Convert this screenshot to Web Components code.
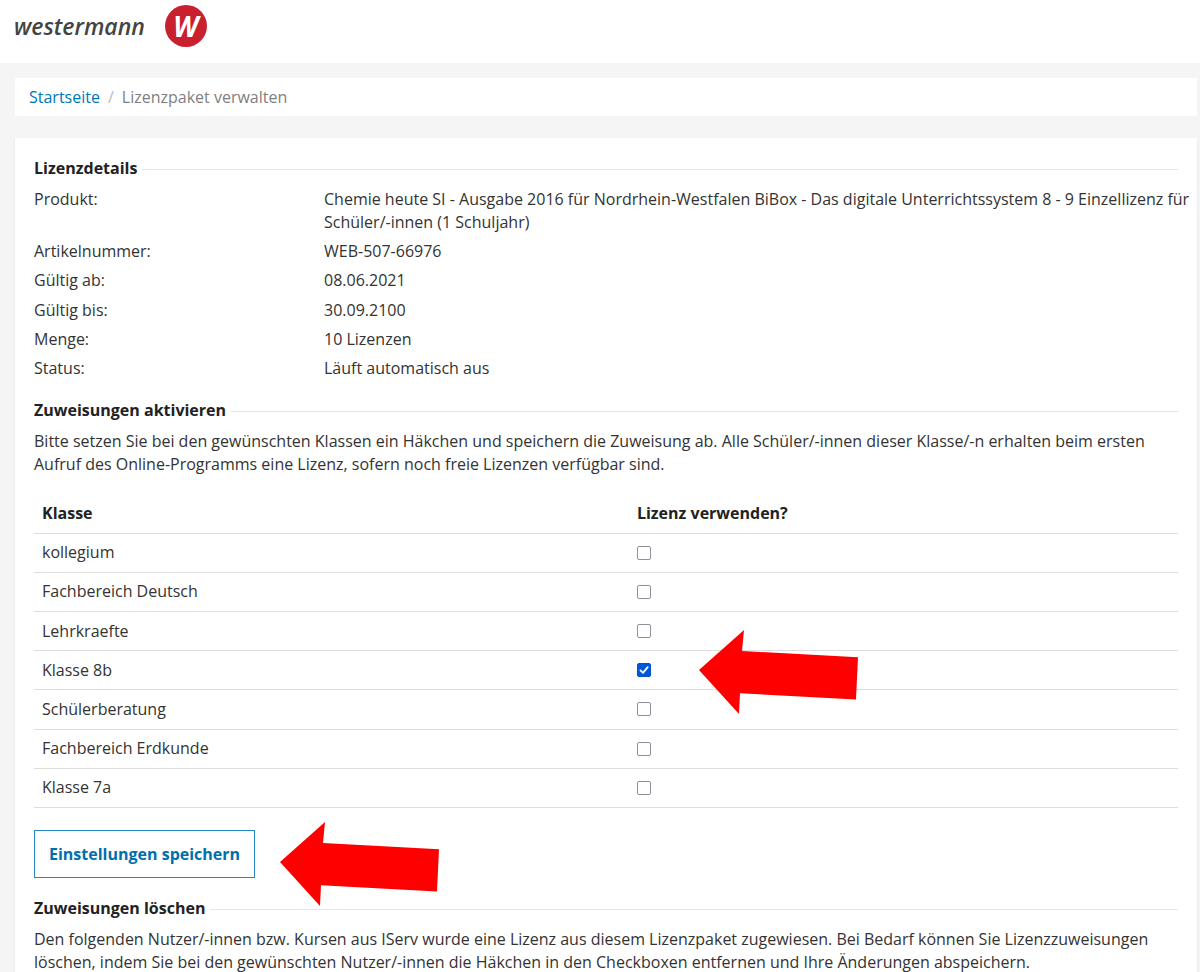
<!DOCTYPE html>
<html lang="de">
<head>
<meta charset="utf-8">
<title>Lizenzpaket verwalten</title>
<style>
body { margin: 0; background: #f5f5f5; color: #333; font: 16px/23px "Open Sans", "Noto Sans", sans-serif; }
</style>
</head>
<body>
<license-page></license-page>

<template id="t-page">
<style>
:host { display: block; }
main { display: flex; flex-direction: column; gap: 22px; padding: 15px 3px 0 15px; }
p { margin: 0; }
.save { display: flex; position: relative; width: fit-content; }
.save pointer-arrow { left: calc(100% + 25px); top: -8px; }
button { font: inherit; font-weight: 700; color: #006fae; background: #fff; border: 1px solid #2487c1; border-radius: 0; padding: 12px 14px; height: 48px; }
</style>
<brand-header></brand-header>
<main>
  <bread-crumb><a href="#" slot="parent">Startseite</a>Lizenzpaket verwalten</bread-crumb>
  <content-card>
    <titled-section heading="Lizenzdetails"><license-details></license-details></titled-section>
    <titled-section heading="Zuweisungen aktivieren">
      <p>Bitte setzen Sie bei den gewünschten Klassen ein Häkchen und speichern die Zuweisung ab. Alle Schüler/-innen dieser Klasse/-n erhalten beim ersten Aufruf des Online-Programms eine Lizenz, sofern noch freie Lizenzen verfügbar sind.</p>
      <class-table></class-table>
      <div class="save"><button type="button">Einstellungen speichern</button><pointer-arrow></pointer-arrow></div>
    </titled-section>
    <titled-section heading="Zuweisungen löschen">
      <p>Den folgenden Nutzer/-innen bzw. Kursen aus IServ wurde eine Lizenz aus diesem Lizenzpaket zugewiesen. Bei Bedarf können Sie Lizenzzuweisungen löschen, indem Sie bei den gewünschten Nutzer/-innen die Häkchen in den Checkboxen entfernen und Ihre Änderungen abspeichern.</p>
    </titled-section>
  </content-card>
</main>
</template>

<template id="t-header">
<style>
:host { display: flex; align-items: center; gap: 20px; box-sizing: border-box; height: 63px; padding: 0 14px 12px; background: #fff; }
.name { font-size: 23px; line-height: 30px; font-style: italic; font-weight: 600; color: #444; }
.mark { display: grid; place-items: center; width: 42px; height: 42px; border-radius: 50%; background: #c8202f; color: #fff; font-size: 28px; line-height: 42px; font-weight: 700; font-style: italic; }
</style>
<span class="name">westermann</span><span class="mark">W</span>
</template>

<template id="t-crumb">
<style>
:host { display: flex; padding: 8px 14px 7px; background: #fff; color: #808080; }
::slotted(a) { color: #0077b3; text-decoration: none; }
.sep { color: #bbb; padding: 0 8px; }
</style>
<slot name="parent"></slot><span class="sep">/</span><span><slot></slot></span>
</template>

<template id="t-card">
<style>
:host { display: flex; flex-direction: column; gap: 19px; padding: 19px 19px 20px; background: #fff; box-shadow: 0 1px 2px rgba(0,0,0,.08); }
</style>
<slot></slot>
</template>

<template id="t-section">
<style>
:host { display: block; }
h2 { display: flex; align-items: center; gap: 5px; margin: 0 0 8px; font-size: 16px; line-height: 23px; font-weight: 700; color: #222; }
h2::after { content: ""; flex: 1; height: 1px; background: #e6e6e6; margin-top: 2px; }
</style>
<h2></h2><slot></slot>
</template>

<template id="t-details">
<style>
:host { display: block; }
dl { display: grid; grid-template-columns: 25% 1fr; row-gap: 6px; min-height: 192px; align-content: space-between; margin: 0 -16px 0 0; }
dt, dd { margin: 0; }
</style>
<dl>
  <dt>Produkt:</dt><dd>Chemie heute SI - Ausgabe 2016 für Nordrhein-Westfalen BiBox - Das digitale Unterrichtssystem 8 - 9 Einzellizenz für Schüler/-innen (1 Schuljahr)</dd>
  <dt>Artikelnummer:</dt><dd>WEB-507-66976</dd>
  <dt>Gültig ab:</dt><dd>08.06.2021</dd>
  <dt>Gültig bis:</dt><dd>30.09.2100</dd>
  <dt>Menge:</dt><dd>10 Lizenzen</dd>
  <dt>Status:</dt><dd>Läuft automatisch aus</dd>
</dl>
</template>

<template id="t-table">
<style>
:host { display: block; margin: 18px 0 22px; }
table { width: 100%; height: 314px; border-collapse: collapse; table-layout: fixed; }
tr { height: 39px; }
th, td { box-sizing: border-box; padding: 0 8px; border-bottom: 1px solid #ddd; text-align: left; }
th { color: #222; font-weight: 700; }
th:first-child { width: 52%; }
.pick { display: flex; position: relative; }
.pick pointer-arrow { left: 62px; top: -33px; }
input { appearance: none; box-sizing: border-box; width: 14px; height: 14px; margin: 0; border: 1px solid #8f8f9d; border-radius: 2px; background: #fff; }
input:checked { border-color: #0053cc; background: #0058d6 url("data:image/svg+xml,%3Csvg xmlns='http://www.w3.org/2000/svg' viewBox='0 0 12 12'%3E%3Cpath d='M2.5 6.4 5 8.8 9.7 3.2' fill='none' stroke='white' stroke-width='1.8' stroke-linecap='round' stroke-linejoin='round'/%3E%3C/svg%3E"); }
</style>
<table><thead><tr><th scope="col">Klasse</th><th scope="col">Lizenz verwenden?</th></tr></thead><tbody></tbody></table>
</template>

<template id="t-arrow">
<style>
:host { position: absolute; display: block; width: 160px; height: 84px; pointer-events: none; }
svg { display: block; }
</style>
<svg width="160" height="84" viewBox="0 0 160 84" aria-hidden="true"><path fill="#f00" d="M0 40 45 0 43 21 159 27.300 157 69.500 41 63.300 40 84Z"/></svg>
</template>

<script>
class TemplateElement extends HTMLElement {
  constructor() {
    super();
    this.attachShadow({ mode: "open" })
      .append(document.getElementById(this.constructor.template).content.cloneNode(true));
  }
}
const simple = id => class extends TemplateElement { static template = id; };

customElements.define("pointer-arrow", simple("t-arrow"));
customElements.define("brand-header", simple("t-header"));
customElements.define("bread-crumb", simple("t-crumb"));
customElements.define("content-card", simple("t-card"));
customElements.define("license-details", simple("t-details"));

customElements.define("titled-section", class extends TemplateElement {
  static template = "t-section";
  connectedCallback() {
    this.shadowRoot.querySelector("h2").textContent = this.getAttribute("heading");
  }
});

customElements.define("class-table", class extends TemplateElement {
  static template = "t-table";
  connectedCallback() {
    const classes = ["kollegium", "Fachbereich Deutsch", "Lehrkraefte", "Klasse 8b", "Schülerberatung", "Fachbereich Erdkunde", "Klasse 7a"];
    const active = "Klasse 8b";
    this.shadowRoot.querySelector("tbody").innerHTML = classes.map((name, i) => `
      <tr><td><label for="c${i}">${name}</label></td>
      <td><div class="pick"><input type="checkbox" id="c${i}"${name === active ? " checked" : ""}>${name === active ? "<pointer-arrow></pointer-arrow>" : ""}</div></td></tr>`).join("");
  }
});

customElements.define("license-page", simple("t-page"));
</script>
</body>
</html>
